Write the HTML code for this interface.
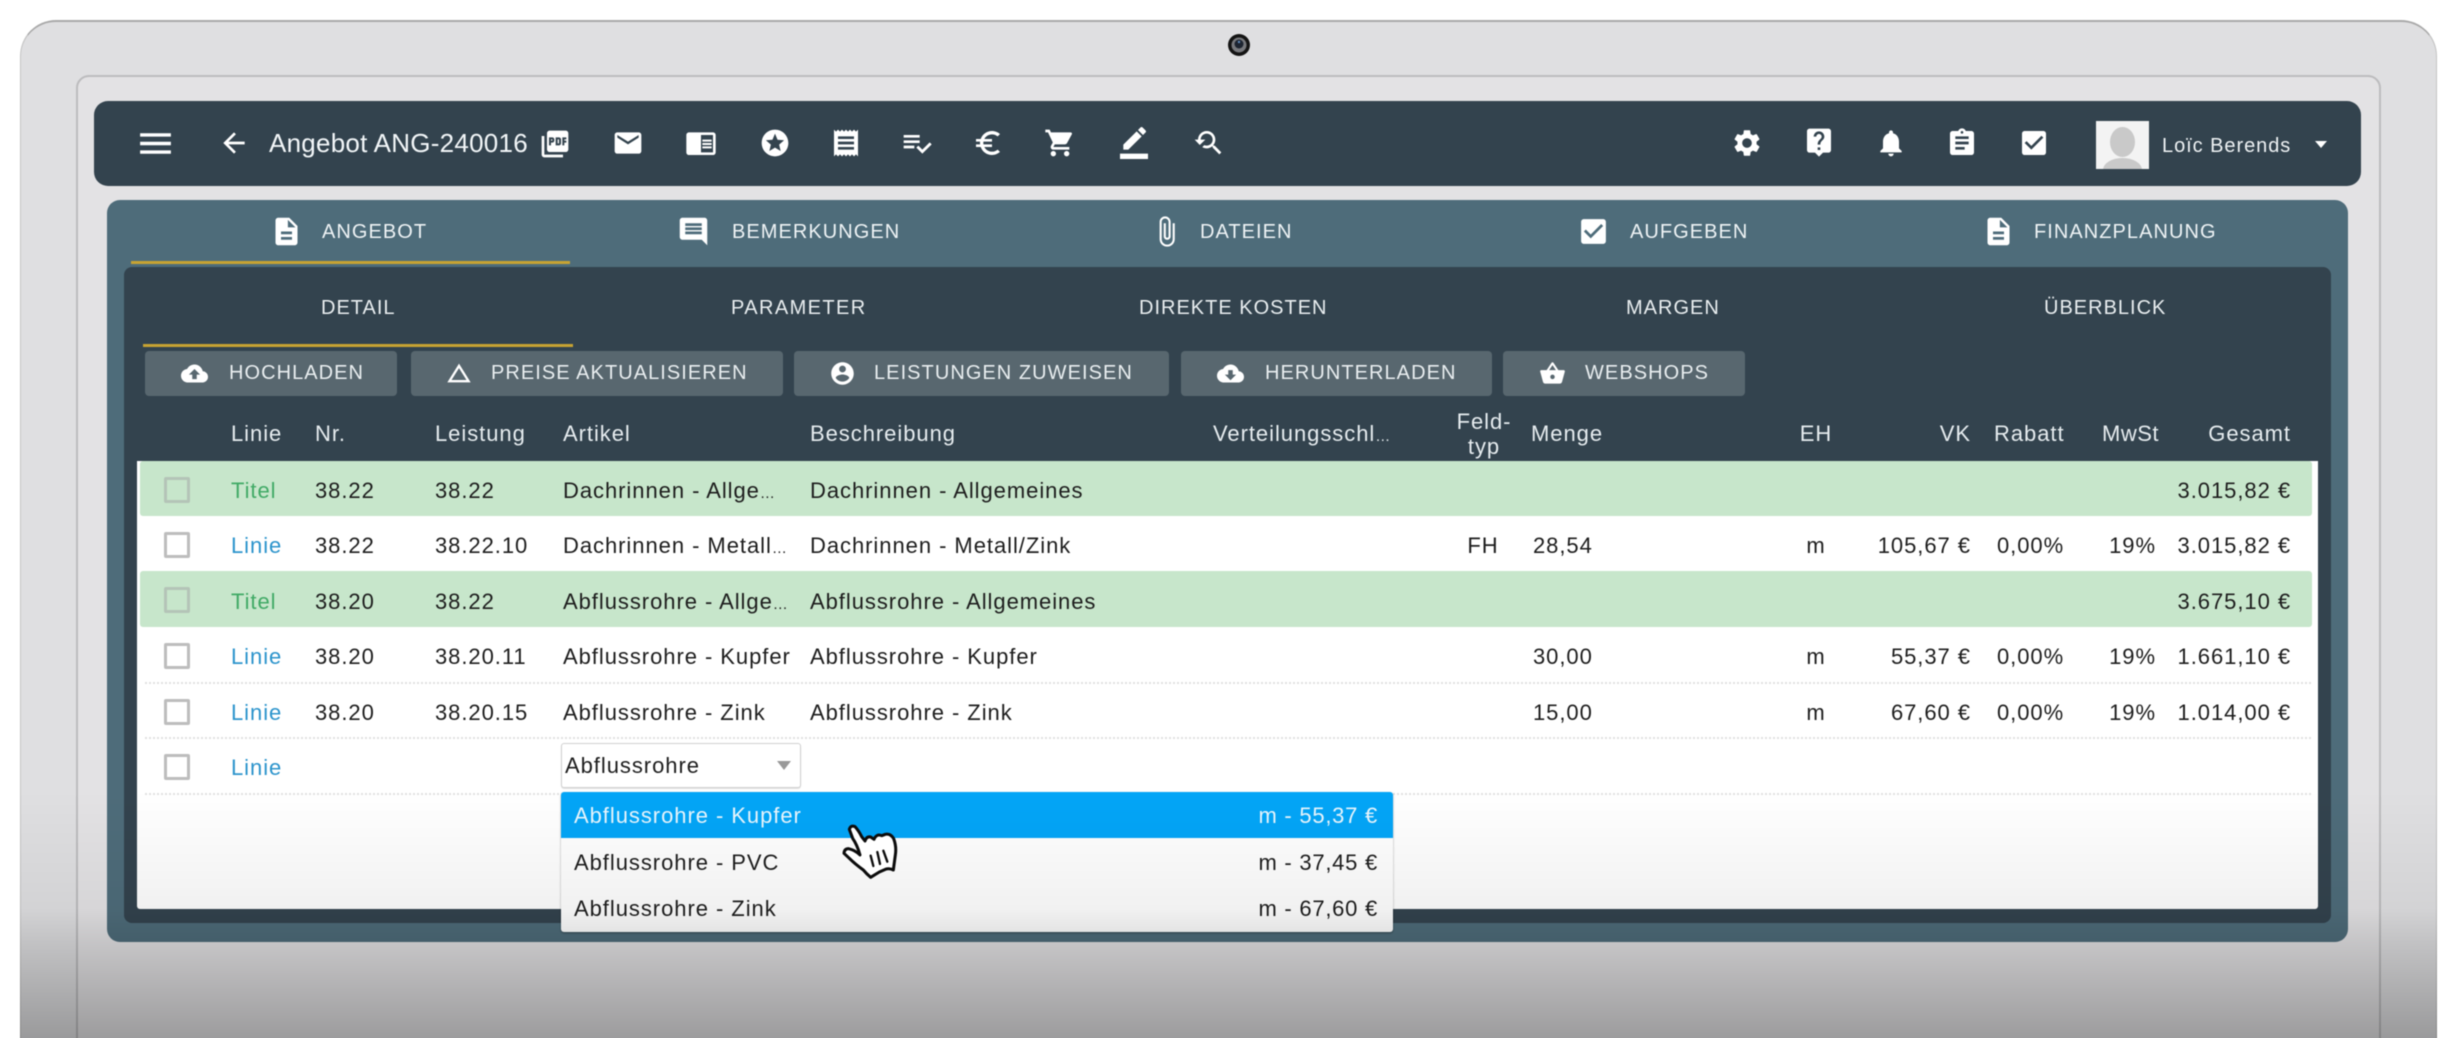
<!DOCTYPE html>
<html lang="de">
<head>
<meta charset="utf-8">
<title>Angebot ANG-240016</title>
<style>
html,body{margin:0;padding:0;background:#fff;}
#p{position:relative;width:2456px;height:1038px;overflow:hidden;background:#fff;font-family:"Liberation Sans",Arial,sans-serif;}
#q{left:0;top:0;width:2456px;height:1038px;filter:blur(.4px);}
#p div,#p svg{position:absolute;}
.t{white-space:nowrap;line-height:30px;height:30px;}
.r{font-size:22px;letter-spacing:.95px;color:#1d1d1d;margin-top:1px;}
.h{font-size:22px;letter-spacing:.95px;color:#e6ecef;margin-top:1px;}
.tab{font-size:20px;letter-spacing:1.05px;color:#eef3f5;margin-top:1px;}
.sub{font-size:20px;letter-spacing:1px;color:#e9eef0;margin-top:1px;}
.btn{font-size:20px;letter-spacing:1.05px;color:#e9eef0;}
.b{background:#58676f;border-radius:4px;height:45px;top:351px;}
.lin{color:#2c94cc;}
.tit{color:#41aa66;}
.ic{fill:#fff;}
.cb{left:164px;width:20px;height:20px;border:3px solid #bdbdbd;border-radius:2px;background:#fff;}
.cbg{border-color:#b4c4b7;background:#c7e6cb;}
.g{left:140px;width:2172px;background:#c7e6cb;border-radius:3px;}
.d{left:145px;width:2166px;height:0;border-top:2px dotted #e0e0e0;}
.e{font-size:15px;letter-spacing:0;}
</style>
</head>
<body>
<div id="p"><div id="q">
  <!-- laptop -->
  <div style="left:20px;top:20px;width:2417px;height:1060px;background:#dfdfe1;border-radius:36px 36px 0 0;border:1px solid #c4c4c4;border-top:2px solid #a9a9a9;box-sizing:border-box;"></div>
  <div style="left:76px;top:75px;width:2305px;height:1000px;background:#e3e2e4;border-radius:13px 13px 0 0;border:2px solid #bcbcbe;box-sizing:border-box;"></div>
  <!-- webcam -->
  <svg style="left:1227px;top:33px" width="24" height="24" viewBox="0 0 24 24"><circle cx="12" cy="12" r="11" fill="#141414"/><circle cx="12" cy="12" r="7.5" fill="#77787c"/><circle cx="12" cy="11" r="4.5" fill="#1d2430"/><circle cx="12" cy="9" r="1.2" fill="#5d86b8"/></svg>

  <!-- toolbar -->
  <div style="left:94px;top:101px;width:2267px;height:85px;background:#33434e;border-radius:14px;"></div>
  <svg class="ic" style="left:135px;top:123px" width="41" height="41" viewBox="0 0 24 24"><path d="M3 18h18v-2H3v2zm0-5h18v-2H3v2zm0-7v2h18V6H3z"/></svg>
  <svg class="ic" style="left:218px;top:127px" width="32" height="32" viewBox="0 0 24 24"><path d="M20 11H7.83l5.59-5.59L12 4l-8 8 8 8 1.41-1.41L7.83 13H20v-2z"/></svg>
  <div class="t" style="left:269px;top:128px;font-size:26px;letter-spacing:.25px;color:#f2f6f8;">Angebot ANG-240016</div>
  <svg class="ic" style="left:539px;top:128px" width="32" height="32" viewBox="0 0 24 24"><path d="M20 2H8c-1.1 0-2 .9-2 2v12c0 1.1.9 2 2 2h12c1.1 0 2-.9 2-2V4c0-1.1-.9-2-2-2zm-8.5 7.5c0 .83-.67 1.5-1.5 1.5H9v2H7.5V7H10c.83 0 1.5.67 1.5 1.5v1zm5 2c0 .83-.67 1.5-1.5 1.5h-2.5V7H15c.83 0 1.5.67 1.5 1.5v3zm4-3H19v1h1.5V11H19v2h-1.5V7h3v1.5zM9 9.5h1v-1H9v1zM4 6H2v14c0 1.1.9 2 2 2h14v-2H4V6zm10 5.5h1v-3h-1v3z"/></svg>
  <svg class="ic" style="left:612px;top:127px" width="32" height="32" viewBox="0 0 24 24"><path d="M20 4H4c-1.1 0-1.99.9-1.99 2L2 18c0 1.1.9 2 2 2h16c1.1 0 2-.9 2-2V6c0-1.1-.9-2-2-2zm0 4l-8 5-8-5V6l8 5 8-5v2z"/></svg>
  <svg class="ic" style="left:685px;top:127px" width="32" height="32" viewBox="0 0 24 24"><path d="M13 12h7v1.5h-7zm0-2.5h7V11h-7zm0 5h7V16h-7zM21 4H3c-1.1 0-2 .9-2 2v13c0 1.1.9 2 2 2h18c1.1 0 2-.9 2-2V6c0-1.1-.9-2-2-2zm0 15h-9V6h9v13z"/></svg>
  <svg class="ic" style="left:759px;top:127px" width="32" height="32" viewBox="0 0 24 24"><path d="M11.99 2C6.47 2 2 6.48 2 12s4.47 10 9.99 10C17.52 22 22 17.52 22 12S17.52 2 11.99 2zm4.24 16L12 15.45 7.77 18l1.12-4.81-3.73-3.23 4.92-.42L12 5l1.92 4.53 4.92.42-3.73 3.23L16.23 18z"/></svg>
  <svg class="ic" style="left:830px;top:127px" width="32" height="32" viewBox="0 0 24 24"><path d="M18 17H6v-2h12v2zm0-4H6v-2h12v2zm0-4H6V7h12v2zM3 22l1.5-1.5L6 22l1.5-1.5L9 22l1.5-1.5L12 22l1.5-1.5L15 22l1.5-1.5L18 22l1.5-1.5L21 22V2l-1.5 1.5L18 2l-1.5 1.5L15 2l-1.5 1.5L12 2l-1.5 1.5L9 2 7.5 3.5 6 2 4.5 3.5 3 2v20z"/></svg>
  <svg class="ic" style="left:901px;top:127px" width="32" height="32" viewBox="0 0 24 24"><path d="M14 10H2v2h12v-2zm0-4H2v2h12V6zM2 16h8v-2H2v2zm19.5-4.5L23 13l-6.99 7-4.51-4.5L13 14l3.01 3 5.49-5.5z"/></svg>
  <svg class="ic" style="left:972px;top:127px" width="32" height="32" viewBox="0 0 24 24"><path d="M15 18.5c-2.51 0-4.68-1.42-5.76-3.5H15v-2H8.58c-.05-.33-.08-.66-.08-1s.03-.67.08-1H15V9H9.24C10.32 6.92 12.5 5.5 15 5.5c1.61 0 3.09.59 4.23 1.57L21 5.3C19.41 3.87 17.3 3 15 3c-3.92 0-7.24 2.51-8.48 6H3v2h3.06c-.04.33-.06.66-.06 1 0 .34.02.67.06 1H3v2h3.52c1.24 3.49 4.56 6 8.48 6 2.31 0 4.41-.87 6-2.3l-1.78-1.77c-1.13.98-2.6 1.57-4.22 1.57z"/></svg>
  <svg class="ic" style="left:1044px;top:127px" width="32" height="32" viewBox="0 0 24 24"><path d="M7 18c-1.1 0-1.99.9-1.99 2S5.9 22 7 22s2-.9 2-2-.9-2-2-2zM1 2v2h2l3.6 7.59-1.35 2.45c-.16.28-.25.61-.25.96 0 1.1.9 2 2 2h12v-2H7.42c-.14 0-.25-.11-.25-.25l.03-.12.9-1.63h7.45c.75 0 1.41-.41 1.75-1.03l3.58-6.49c.08-.14.12-.31.12-.48 0-.55-.45-1-1-1H5.21l-.94-2H1zm16 16c-1.1 0-1.99.9-1.99 2s.89 2 1.99 2 2-.9 2-2-.9-2-2-2z"/></svg>
  <svg class="ic" style="left:1118px;top:127px" width="32" height="32" viewBox="0 0 24 24"><path d="M17.75 7L14 3.25l-10 10V17h3.75l10-10zm2.96-2.96c.39-.39.39-1.02 0-1.41L18.37.29c-.39-.39-1.02-.39-1.41 0L15 2.25 18.75 6l1.96-1.96z"/><path d="M1.5 20h21v4h-21z"/></svg>
  <svg class="ic" style="left:1192px;top:127px" width="32" height="32" viewBox="0 0 24 24"><path d="M17.01 14h-.8l-.27-.27c.98-1.14 1.57-2.61 1.57-4.23 0-3.59-2.91-6.5-6.5-6.5s-6.5 3-6.5 6.5H2l3.84 4 4.16-4H6.51C6.51 7 8.53 5 11.01 5s4.5 2.01 4.5 4.5c0 2.48-2.02 4.5-4.5 4.5-.65 0-1.26-.14-1.82-.38L7.71 15.1c.97.57 2.09.9 3.3.9 1.61 0 3.08-.59 4.22-1.57l.27.27v.79l5.01 5L21.99 19l-4.98-5z"/></svg>

  <svg class="ic" style="left:1731px;top:127px" width="32" height="32" viewBox="0 0 24 24"><path d="M19.14 12.94c.04-.3.06-.61.06-.94 0-.32-.02-.64-.07-.94l2.03-1.58c.18-.14.23-.41.12-.61l-1.92-3.32c-.12-.22-.37-.29-.59-.22l-2.39.96c-.5-.38-1.03-.7-1.62-.94l-.36-2.54c-.04-.24-.24-.41-.48-.41h-3.84c-.24 0-.43.17-.47.41l-.36 2.54c-.59.24-1.13.57-1.62.94l-2.39-.96c-.22-.08-.47 0-.59.22L2.74 8.87c-.12.21-.08.47.12.61l2.03 1.58c-.05.3-.09.63-.09.94s.02.64.07.94l-2.03 1.58c-.18.14-.23.41-.12.61l1.92 3.32c.12.22.37.29.59.22l2.39-.96c.5.38 1.03.7 1.62.94l.36 2.54c.05.24.24.41.48.41h3.84c.24 0 .44-.17.47-.41l.36-2.54c.59-.24 1.13-.56 1.62-.94l2.39.96c.22.08.47 0 .59-.22l1.92-3.32c.12-.22.07-.47-.12-.61l-2.01-1.58zM12 15.6c-1.98 0-3.6-1.62-3.6-3.6s1.62-3.6 3.6-3.6 3.6 1.62 3.6 3.6-1.62 3.6-3.6 3.6z"/></svg>
  <svg class="ic" style="left:1803px;top:126px" width="32" height="32" viewBox="0 0 24 24"><path d="M19 2H5c-1.11 0-2 .9-2 2v14c0 1.1.89 2 2 2h4l3 3 3-3h4c1.1 0 2-.9 2-2V4c0-1.1-.9-2-2-2zm-6 16h-2v-2h2v2zm2.07-7.75l-.9.92C13.45 11.9 13 12.5 13 14h-2v-.5c0-1.1.45-2.1 1.17-2.83l1.24-1.26c.37-.36.59-.86.59-1.41 0-1.1-.9-2-2-2s-2 .9-2 2H8c0-2.21 1.79-4 4-4s4 1.79 4 4c0 .88-.36 1.68-.93 2.25z"/></svg>
  <svg class="ic" style="left:1875px;top:127px" width="32" height="32" viewBox="0 0 24 24"><path d="M12 22c1.1 0 2-.9 2-2h-4c0 1.1.89 2 2 2zm6-6v-5c0-3.07-1.64-5.64-4.5-6.32V4c0-.83-.67-1.5-1.5-1.5s-1.5.67-1.5 1.5v.68C7.63 5.36 6 7.92 6 11v5l-2 2v1h16v-1l-2-2z"/></svg>
  <svg class="ic" style="left:1946px;top:127px" width="32" height="32" viewBox="0 0 24 24"><path d="M19 3h-4.18C14.4 1.84 13.3 1 12 1c-1.3 0-2.4.84-2.82 2H5c-1.1 0-2 .9-2 2v14c0 1.1.9 2 2 2h14c1.1 0 2-.9 2-2V5c0-1.1-.9-2-2-2zm-7 0c.55 0 1 .45 1 1s-.45 1-1 1-1-.45-1-1 .45-1 1-1zm2 14H7v-2h7v2zm3-4H7v-2h10v2zm0-4H7V7h10v2z"/></svg>
  <svg class="ic" style="left:2018px;top:127px" width="32" height="32" viewBox="0 0 24 24"><path d="M19 3H5c-1.11 0-2 .9-2 2v14c0 1.1.89 2 2 2h14c1.11 0 2-.9 2-2V5c0-1.1-.89-2-2-2zm-9 14l-5-5 1.41-1.41L10 14.17l7.59-7.59L19 8l-9 9z"/></svg>
  <div style="left:2096px;top:121px;width:53px;height:48px;background:#f3f3f3;overflow:hidden;">
    <div style="left:14px;top:6px;width:25px;height:30px;border-radius:50%;background:#c9c9c9;"></div>
    <div style="left:7px;top:37px;width:39px;height:24px;border-radius:50%;background:#c9c9c9;"></div>
  </div>
  <div class="t" style="left:2162px;top:131px;font-size:20px;letter-spacing:.95px;color:#eef2f4;">Loïc Berends</div>
  <div style="left:2315px;top:141px;width:0;height:0;border-left:6px solid transparent;border-right:6px solid transparent;border-top:7px solid #fff;"></div>

  <!-- panel -->
  <div style="left:107px;top:200px;width:2241px;height:742px;background:#4e6c7a;border-radius:13px;"></div>
  <div style="left:131px;top:261px;width:439px;height:3px;background:#c7a332;"></div>

  <svg class="ic" style="left:270px;top:215px" width="33" height="33" viewBox="0 0 24 24"><path d="M14 2H6c-1.1 0-1.99.9-1.99 2L4 20c0 1.1.89 2 1.99 2H18c1.1 0 2-.9 2-2V8l-6-6zm2 16H8v-2h8v2zm0-4H8v-2h8v2zm-3-5V3.5L18.5 9H13z"/></svg>
  <div class="t tab" style="left:322px;top:216px;">ANGEBOT</div>
  <svg class="ic" style="left:677px;top:215px" width="33" height="33" viewBox="0 0 24 24"><path d="M21.99 4c0-1.1-.89-2-1.99-2H4c-1.1 0-2 .9-2 2v12c0 1.1.9 2 2 2h14l4 4-.01-18zM18 14H6v-2h12v2zm0-3H6V9h12v2zm0-3H6V6h12v2z"/></svg>
  <div class="t tab" style="left:732px;top:216px;">BEMERKUNGEN</div>
  <svg class="ic" style="left:1150px;top:215px" width="33" height="33" viewBox="0 0 24 24"><path d="M16.5 6v11.5c0 2.21-1.79 4-4 4s-4-1.79-4-4V5c0-1.38 1.12-2.5 2.5-2.5s2.5 1.12 2.5 2.5v10.5c0 .55-.45 1-1 1s-1-.45-1-1V6H10v9.5c0 1.38 1.12 2.5 2.5 2.5s2.5-1.12 2.5-2.5V5c0-2.21-1.79-4-4-4S7 2.79 7 5v12.5c0 3.04 2.46 5.5 5.5 5.5s5.5-2.46 5.5-5.5V6h-1.5z"/></svg>
  <div class="t tab" style="left:1200px;top:216px;">DATEIEN</div>
  <svg class="ic" style="left:1577px;top:215px" width="33" height="33" viewBox="0 0 24 24"><path d="M19 3H5c-1.11 0-2 .9-2 2v14c0 1.1.89 2 2 2h14c1.11 0 2-.9 2-2V5c0-1.1-.89-2-2-2zm-9 14l-5-5 1.41-1.41L10 14.17l7.59-7.59L19 8l-9 9z"/></svg>
  <div class="t tab" style="left:1630px;top:216px;">AUFGEBEN</div>
  <svg class="ic" style="left:1982px;top:215px" width="33" height="33" viewBox="0 0 24 24"><path d="M14 2H6c-1.1 0-1.99.9-1.99 2L4 20c0 1.1.89 2 1.99 2H18c1.1 0 2-.9 2-2V8l-6-6zm2 16H8v-2h8v2zm0-4H8v-2h8v2zm-3-5V3.5L18.5 9H13z"/></svg>
  <div class="t tab" style="left:2034px;top:216px;">FINANZPLANUNG</div>

  <!-- dark -->
  <div style="left:124px;top:267px;width:2207px;height:656px;background:#33434e;border-radius:8px;"></div>
  <div class="t sub" style="left:321px;top:292px;">DETAIL</div>
  <div class="t sub" style="left:731px;top:292px;letter-spacing:1.4px;">PARAMETER</div>
  <div class="t sub" style="left:1139px;top:292px;">DIREKTE KOSTEN</div>
  <div class="t sub" style="left:1626px;top:292px;">MARGEN</div>
  <div class="t sub" style="left:2044px;top:292px;">ÜBERBLICK</div>
  <div style="left:143px;top:344px;width:430px;height:3px;background:#c7a332;"></div>

  <!-- buttons -->
  <div class="b" style="left:145px;width:252px;"></div>
  <svg class="ic" style="left:181px;top:360px" width="27" height="27" viewBox="0 0 24 24"><path d="M19.35 10.04C18.67 6.59 15.64 4 12 4 9.11 4 6.6 5.64 5.35 8.04 2.34 8.36 0 10.91 0 14c0 3.31 2.69 6 6 6h13c2.76 0 5-2.24 5-5 0-2.64-2.05-4.78-4.65-4.96zM14 13v4h-4v-4H7l5-5 5 5h-3z"/></svg>
  <div class="t btn" style="left:229px;top:358px;">HOCHLADEN</div>
  <div class="b" style="left:411px;width:372px;"></div>
  <svg class="ic" style="left:445px;top:359px" width="28" height="28" viewBox="0 0 24 24"><path d="M12 7.77L18.39 18H5.61L12 7.77M12 4L2 20h20L12 4z"/></svg>
  <div class="t btn" style="left:491px;top:358px;">PREISE AKTUALISIEREN</div>
  <div class="b" style="left:794px;width:375px;"></div>
  <svg class="ic" style="left:829px;top:360px" width="27" height="27" viewBox="0 0 24 24"><path d="M12 2C6.48 2 2 6.48 2 12s4.48 10 10 10 10-4.48 10-10S17.52 2 12 2zm0 3c1.66 0 3 1.34 3 3s-1.34 3-3 3-3-1.34-3-3 1.34-3 3-3zm0 14.2c-2.5 0-4.71-1.28-6-3.22.03-1.99 4-3.08 6-3.08 1.99 0 5.97 1.09 6 3.08-1.29 1.94-3.5 3.22-6 3.22z"/></svg>
  <div class="t btn" style="left:874px;top:358px;">LEISTUNGEN ZUWEISEN</div>
  <div class="b" style="left:1181px;width:311px;"></div>
  <svg class="ic" style="left:1217px;top:360px" width="27" height="27" viewBox="0 0 24 24"><path d="M19.35 10.04C18.67 6.59 15.64 4 12 4 9.11 4 6.6 5.64 5.35 8.04 2.34 8.36 0 10.91 0 14c0 3.31 2.69 6 6 6h13c2.76 0 5-2.24 5-5 0-2.64-2.05-4.78-4.65-4.96zM17 13l-5 5-5-5h3V9h4v4h3z"/></svg>
  <div class="t btn" style="left:1265px;top:358px;">HERUNTERLADEN</div>
  <div class="b" style="left:1503px;width:242px;"></div>
  <svg class="ic" style="left:1539px;top:360px" width="27" height="27" viewBox="0 0 24 24"><path d="M17.21 9l-4.38-6.56c-.19-.28-.51-.42-.83-.42-.32 0-.64.14-.83.43L6.79 9H2c-.55 0-1 .45-1 1 0 .09.01.18.04.27l2.54 9.27c.23.84 1 1.46 1.92 1.46h13c.92 0 1.69-.62 1.93-1.46l2.54-9.27L23 10c0-.55-.45-1-1-1h-4.79zM9 9l3-4.4L15 9H9zm3 8c-1.1 0-2-.9-2-2s.9-2 2-2 2 .9 2 2-.9 2-2 2z"/></svg>
  <div class="t btn" style="left:1585px;top:358px;">WEBSHOPS</div>

  <!-- table header -->
  <div class="t h" style="left:231px;top:418px;">Linie</div>
  <div class="t h" style="left:315px;top:418px;">Nr.</div>
  <div class="t h" style="left:435px;top:418px;">Leistung</div>
  <div class="t h" style="left:563px;top:418px;">Artikel</div>
  <div class="t h" style="left:810px;top:418px;">Beschreibung</div>
  <div class="t h" style="left:1213px;top:418px;">Verteilungsschl<span class="e">…</span></div>
  <div class="t h" style="left:1444px;width:80px;text-align:center;top:406px;">Feld-</div>
  <div class="t h" style="left:1444px;width:80px;text-align:center;top:431px;">typ</div>
  <div class="t h" style="left:1531px;top:418px;">Menge</div>
  <div class="t h" style="left:1776px;width:80px;text-align:center;top:418px;">EH</div>
  <div class="t h" style="right:485px;top:418px;">VK</div>
  <div class="t h" style="left:1994px;top:418px;">Rabatt</div>
  <div class="t h" style="left:2102px;top:418px;letter-spacing:.5px;">MwSt</div>
  <div class="t h" style="right:165px;top:418px;">Gesamt</div>

  <!-- white card -->
  <div style="left:137px;top:461px;width:2181px;height:448px;background:#fff;border-radius:0 0 3px 3px;"></div>
  <div class="g" style="top:461px;height:55px;"></div>
  <div class="g" style="top:571px;height:56px;"></div>
  <div class="d" style="top:682px;"></div>
  <div class="d" style="top:737px;"></div>
  <div class="d" style="top:793px;"></div>

  <div class="cb cbg" style="top:477px;"></div>
  <div class="cb" style="top:532px;"></div>
  <div class="cb cbg" style="top:587px;"></div>
  <div class="cb" style="top:643px;"></div>
  <div class="cb" style="top:699px;"></div>
  <div class="cb" style="top:754px;"></div>

  <!-- row 1 -->
  <div class="t r tit" style="left:231px;top:475px;">Titel</div>
  <div class="t r" style="left:315px;top:475px;">38.22</div>
  <div class="t r" style="left:435px;top:475px;">38.22</div>
  <div class="t r" style="left:563px;top:475px;">Dachrinnen - Allge<span class="e">…</span></div>
  <div class="t r" style="left:810px;top:475px;">Dachrinnen - Allgemeines</div>
  <div class="t r" style="right:165px;top:475px;">3.015,82 €</div>
  <!-- row 2 -->
  <div class="t r lin" style="left:231px;top:530px;">Linie</div>
  <div class="t r" style="left:315px;top:530px;">38.22</div>
  <div class="t r" style="left:435px;top:530px;">38.22.10</div>
  <div class="t r" style="left:563px;top:530px;">Dachrinnen - Metall<span class="e">…</span></div>
  <div class="t r" style="left:810px;top:530px;">Dachrinnen - Metall/Zink</div>
  <div class="t r" style="left:1443px;width:80px;text-align:center;top:530px;">FH</div>
  <div class="t r" style="left:1533px;top:530px;">28,54</div>
  <div class="t r" style="left:1776px;width:80px;text-align:center;top:530px;">m</div>
  <div class="t r" style="right:485px;top:530px;">105,67 €</div>
  <div class="t r" style="left:1997px;top:530px;">0,00%</div>
  <div class="t r" style="right:300px;top:530px;">19%</div>
  <div class="t r" style="right:165px;top:530px;">3.015,82 €</div>
  <!-- row 3 -->
  <div class="t r tit" style="left:231px;top:586px;">Titel</div>
  <div class="t r" style="left:315px;top:586px;">38.20</div>
  <div class="t r" style="left:435px;top:586px;">38.22</div>
  <div class="t r" style="left:563px;top:586px;">Abflussrohre - Allge<span class="e">…</span></div>
  <div class="t r" style="left:810px;top:586px;">Abflussrohre - Allgemeines</div>
  <div class="t r" style="right:165px;top:586px;">3.675,10 €</div>
  <!-- row 4 -->
  <div class="t r lin" style="left:231px;top:641px;">Linie</div>
  <div class="t r" style="left:315px;top:641px;">38.20</div>
  <div class="t r" style="left:435px;top:641px;">38.20.11</div>
  <div class="t r" style="left:563px;top:641px;">Abflussrohre - Kupfer</div>
  <div class="t r" style="left:810px;top:641px;">Abflussrohre - Kupfer</div>
  <div class="t r" style="left:1533px;top:641px;">30,00</div>
  <div class="t r" style="left:1776px;width:80px;text-align:center;top:641px;">m</div>
  <div class="t r" style="right:485px;top:641px;">55,37 €</div>
  <div class="t r" style="left:1997px;top:641px;">0,00%</div>
  <div class="t r" style="right:300px;top:641px;">19%</div>
  <div class="t r" style="right:165px;top:641px;">1.661,10 €</div>
  <!-- row 5 -->
  <div class="t r lin" style="left:231px;top:697px;">Linie</div>
  <div class="t r" style="left:315px;top:697px;">38.20</div>
  <div class="t r" style="left:435px;top:697px;">38.20.15</div>
  <div class="t r" style="left:563px;top:697px;">Abflussrohre - Zink</div>
  <div class="t r" style="left:810px;top:697px;">Abflussrohre - Zink</div>
  <div class="t r" style="left:1533px;top:697px;">15,00</div>
  <div class="t r" style="left:1776px;width:80px;text-align:center;top:697px;">m</div>
  <div class="t r" style="right:485px;top:697px;">67,60 €</div>
  <div class="t r" style="left:1997px;top:697px;">0,00%</div>
  <div class="t r" style="right:300px;top:697px;">19%</div>
  <div class="t r" style="right:165px;top:697px;">1.014,00 €</div>
  <!-- row 6 -->
  <div class="t r lin" style="left:231px;top:752px;">Linie</div>
  <div style="left:561px;top:743px;width:240px;height:45px;box-sizing:border-box;background:#fff;border:1.5px solid #d0d0d0;border-radius:3px;box-shadow:0 1px 1px rgba(0,0,0,.12);"></div>
  <div class="t r" style="left:565px;top:750px;">Abflussrohre</div>
  <div style="left:777px;top:761px;width:0;height:0;border-left:7px solid transparent;border-right:7px solid transparent;border-top:9px solid #999;"></div>

  <!-- dropdown -->
  <div style="left:561px;top:792px;width:832px;height:140px;background:#fff;border-radius:3px;box-shadow:0 1px 2px rgba(0,0,0,.35);overflow:hidden;">
    <div style="left:0;top:0;width:832px;height:46px;background:#03a5f7;"></div>
  </div>
  <div class="t r" style="left:574px;top:800px;color:#e8f6fe;">Abflussrohre - Kupfer</div>
  <div class="t r" style="right:1078px;top:800px;color:#e8f6fe;letter-spacing:.75px;">m - 55,37 €</div>
  <div class="t r" style="left:574px;top:847px;">Abflussrohre - PVC</div>
  <div class="t r" style="right:1078px;top:847px;letter-spacing:.75px;">m - 37,45 €</div>
  <div class="t r" style="left:574px;top:893px;">Abflussrohre - Zink</div>
  <div class="t r" style="right:1078px;top:893px;letter-spacing:.75px;">m - 67,60 €</div>

  <!-- bottom fade -->
  <div style="left:20px;top:790px;width:2417px;height:290px;background:linear-gradient(to bottom,rgba(0,0,0,0) 0,rgba(0,0,0,.055) 119px,rgba(0,0,0,.13) 152px,rgba(0,0,0,.31) 248px,rgba(0,0,0,.38) 290px);"></div>

  <!-- hand cursor -->
  <svg style="left:800px;top:790px" width="150" height="110" viewBox="0 0 450 330"><path d="M148 118Q152 104 165 110Q176 122 185 140L195 153Q200 138 212 141L222 148Q230 130 245 137L256 133Q272 130 281 146Q290 170 286 195L280 240Q268 234 256 238L238 246L212 262Q200 252 190 240Q165 222 148 205L132 190Q133 176 146 176Q165 180 180 195Q172 165 158 145Z" fill="#fff" stroke="#0c0c0c" stroke-width="9" stroke-linejoin="round"/><path d="M212 197L220 228M232 186L240 222M250 182L262 215" fill="none" stroke="#0c0c0c" stroke-width="7" stroke-linecap="round"/></svg>
</div></div>
</body>
</html>
